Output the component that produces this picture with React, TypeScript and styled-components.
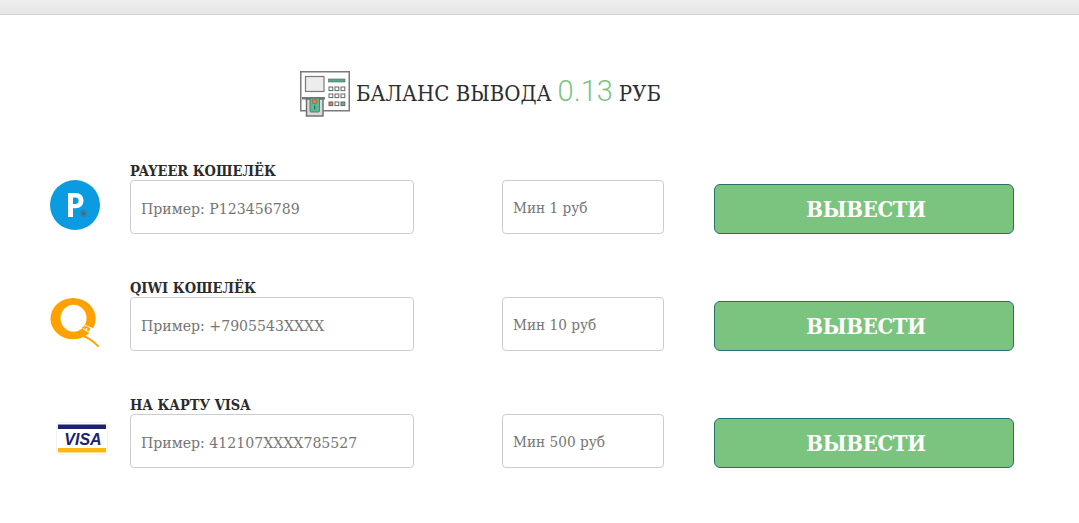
import React from 'react'
import styled, { createGlobalStyle } from 'styled-components'

const GlobalStyle = createGlobalStyle`
  html, body {
    margin: 0;
    padding: 0;
    background: #ffffff;
    overflow: hidden;
  }
`

const slab = `"DejaVu Serif Condensed", "DejaVu Serif", "Liberation Serif", serif`

const Page = styled.div`
  font-family: ${slab};
  color: #2b2b2b;
  height: 523px;
`

const TopBar = styled.div`
  height: 14px;
  background: linear-gradient(to bottom, #eeeeee, #e6e6e6);
  border-bottom: 1px solid #d6d6d6;
`

const Balance = styled.div`
  display: flex;
  align-items: center;
  padding: 55px 0 0 300px;
  height: 47px;
  gap: 6px;
  font-size: 22px;
  color: #2c2f33;
`

const BalanceText = styled.span`
  white-space: nowrap;
  margin-bottom: 5px;
`

const Amount = styled.span`
  font-family: Roboto, "Liberation Sans", sans-serif;
  font-weight: 300;
  font-size: 29px;
  color: #7bc47f;
  margin: 0 6px;
`

const List = styled.div`
  display: flex;
  flex-direction: column;
  gap: 63px;
  padding: 63px 0 0 50px;
`

const Row = styled.div`
  display: grid;
  grid-template-columns: 50px 314px 250px 350px;
  align-items: end;
  height: 54px;
`

const LogoBox = styled.div`
  display: flex;
  align-items: flex-start;
  height: 54px;
`

const Field = styled.div`
  position: relative;
  margin-left: 30px;
`

const FieldLabel = styled.label`
  position: absolute;
  left: 0;
  top: -19px;
  font-size: 14.5px;
  font-weight: 700;
  line-height: 19px;
  color: #2b2b2b;
  white-space: nowrap;
`

const TextInput = styled.input<{ $width: number; $size: number }>`
  display: block;
  box-sizing: border-box;
  width: ${p => p.$width}px;
  height: 54px;
  padding: 2px 10px 0;
  border: 1px solid #cccccc;
  border-radius: 4px;
  background: #ffffff;
  font-family: ${slab};
  font-size: ${p => p.$size}px;
  color: #555555;
  outline: none;

  &::placeholder {
    color: #757575;
    opacity: 1;
  }
`

const AmountField = styled.div`
  margin-left: 88px;
`

const Submit = styled.button`
  box-sizing: border-box;
  width: 300px;
  height: 50px;
  margin-left: 50px;
  padding: 0 0 0 4px;
  border: 1px solid #27706b;
  border-radius: 6px;
  background: #7bc47f;
  font-family: ${slab};
  font-size: 22px;
  font-weight: 700;
  letter-spacing: -0.3px;
  color: #ffffff;
  cursor: pointer;
`

const VisaSvg = styled.svg`
  flex-shrink: 0;
  margin: 8px 0 0 6px;
`

const AtmIcon = () => (
  <svg width="50" height="48" viewBox="0 0 50 48">
    <rect x="0.75" y="1.75" width="48.500" height="39" fill="#fff" stroke="#7b7b7b" strokeWidth="1.5" />
    <rect x="5.500" y="6.500" width="18.500" height="15" fill="#ededed" stroke="#7b7b7b" strokeWidth="1.2" />
    <rect x="28.500" y="9" width="16.500" height="3" fill="#57a58a" stroke="#666" strokeWidth="0.6" />
    {[17, 24, 32].map(y => [29, 35, 41].map(x => (
      <rect key={`${x}-${y}`} x={x} y={y} width="3.800" height="3.600" fill={y === 32 && x === 29 ? '#e8813f' : y === 32 && x === 41 ? '#57b08f' : '#fff'} stroke="#666" strokeWidth="1" />
    )))}
    <rect x="2" y="27" width="23" height="2.500" fill="#7b7b7b" />
    <rect x="6.500" y="29" width="16.500" height="17" fill="#d8d8d8" stroke="#6b6b6b" strokeWidth="1.400" />
    <rect x="10" y="28" width="9.500" height="14" rx="1" fill="#5cbb97" stroke="#4d6b62" strokeWidth="0.800" />
    <circle cx="14.700" cy="31.500" r="2.400" fill="#e8813f" stroke="#7a5a3a" strokeWidth="0.600" />
    <rect x="14.100" y="35.500" width="1.200" height="4" fill="#38665a" />
  </svg>
)

const PayeerLogo = () => (
  <svg width="50" height="50" viewBox="0 0 50 50">
    <circle cx="25" cy="25" r="25" fill="#0a9be0" />
    <path d="M18 37V13h7.500c5 0 8 3 8 7.600 0 4.800-3.200 7.700-8 7.700H23V37h-5zm5-13h2.300c2.200 0 3.300-1.300 3.300-3.300 0-2-1.100-3.200-3.300-3.200H23V24z" fill="#ffffff" />
    <circle cx="33.500" cy="33.500" r="3.400" fill="#3d7f9e" />
    <circle cx="33.500" cy="33.500" r="1.500" fill="#2f6d8b" />
  </svg>
)

const QiwiLogo = () => (
  <svg width="52" height="52" viewBox="0 0 52 52">
    <path fillRule="evenodd" d="M24 0a23.500 21.500 0 1 0 0 43a23.500 21.500 0 1 0 0 -43zM24.500 7a13.500 14 0 1 1 0 28a13.500 14 0 1 1 0 -28z" fill="#ffa200" />
    <path d="M34 32l3-4 9 4-3 6z" fill="#ffffff" />
    <path d="M33 30.500c2-1 4-1.500 6-.8l3 2-2 3.300c-2-2-4.500-3.200-7-4.500z" fill="#ffa200" />
    <circle cx="38" cy="32" r="0.900" fill="#ffffff" />
    <path d="M23 38.500c7-1 12 1 17 3.500 4 2.500 7 5 10 8" fill="none" stroke="#ffa200" strokeWidth="2" strokeLinecap="round" />
  </svg>
)

const VisaLogo = () => (
  <VisaSvg width="52" height="33" viewBox="0 0 52 33">
    <rect x="0.500" y="0.500" width="51" height="32" rx="2" fill="#ffffff" stroke="#f1f1f1" />
    <rect x="2" y="2.500" width="48" height="4.500" fill="#1d2173" />
    <rect x="2" y="26" width="48" height="4.500" fill="#fbb714" />
    <text x="27" y="22.500" textAnchor="middle" fontFamily="'Liberation Sans', sans-serif" fontSize="16" fontWeight="700" fontStyle="italic" fill="#1d2173">VISA</text>
  </VisaSvg>
)

const methods = [
  { label: 'PAYEER КОШЕЛЁК', example: 'Пример: P123456789', min: 'Мин 1 руб', Logo: PayeerLogo },
  { label: 'QIWI КОШЕЛЁК', example: 'Пример: +7905543XXXX', min: 'Мин 10 руб', Logo: QiwiLogo },
  { label: 'НА КАРТУ VISA', example: 'Пример: 412107XXXX785527', min: 'Мин 500 руб', Logo: VisaLogo },
]

const App: React.FC = () => {
  return (
    <Page>
      <GlobalStyle />
      <TopBar />
      <Balance>
        <AtmIcon />
        <BalanceText>
          БАЛАНС ВЫВОДА<Amount>0.13</Amount>РУБ
        </BalanceText>
      </Balance>
      <List>
        {methods.map(({ label, example, min, Logo }) => (
          <Row key={label}>
            <LogoBox>
              <Logo />
            </LogoBox>
            <Field>
              <FieldLabel>{label}</FieldLabel>
              <TextInput $width={284} $size={15.7} placeholder={example} />
            </Field>
            <AmountField>
              <TextInput $width={162} $size={15.2} placeholder={min} />
            </AmountField>
            <Submit>ВЫВЕСТИ</Submit>
          </Row>
        ))}
      </List>
    </Page>
  )
}

export default App
